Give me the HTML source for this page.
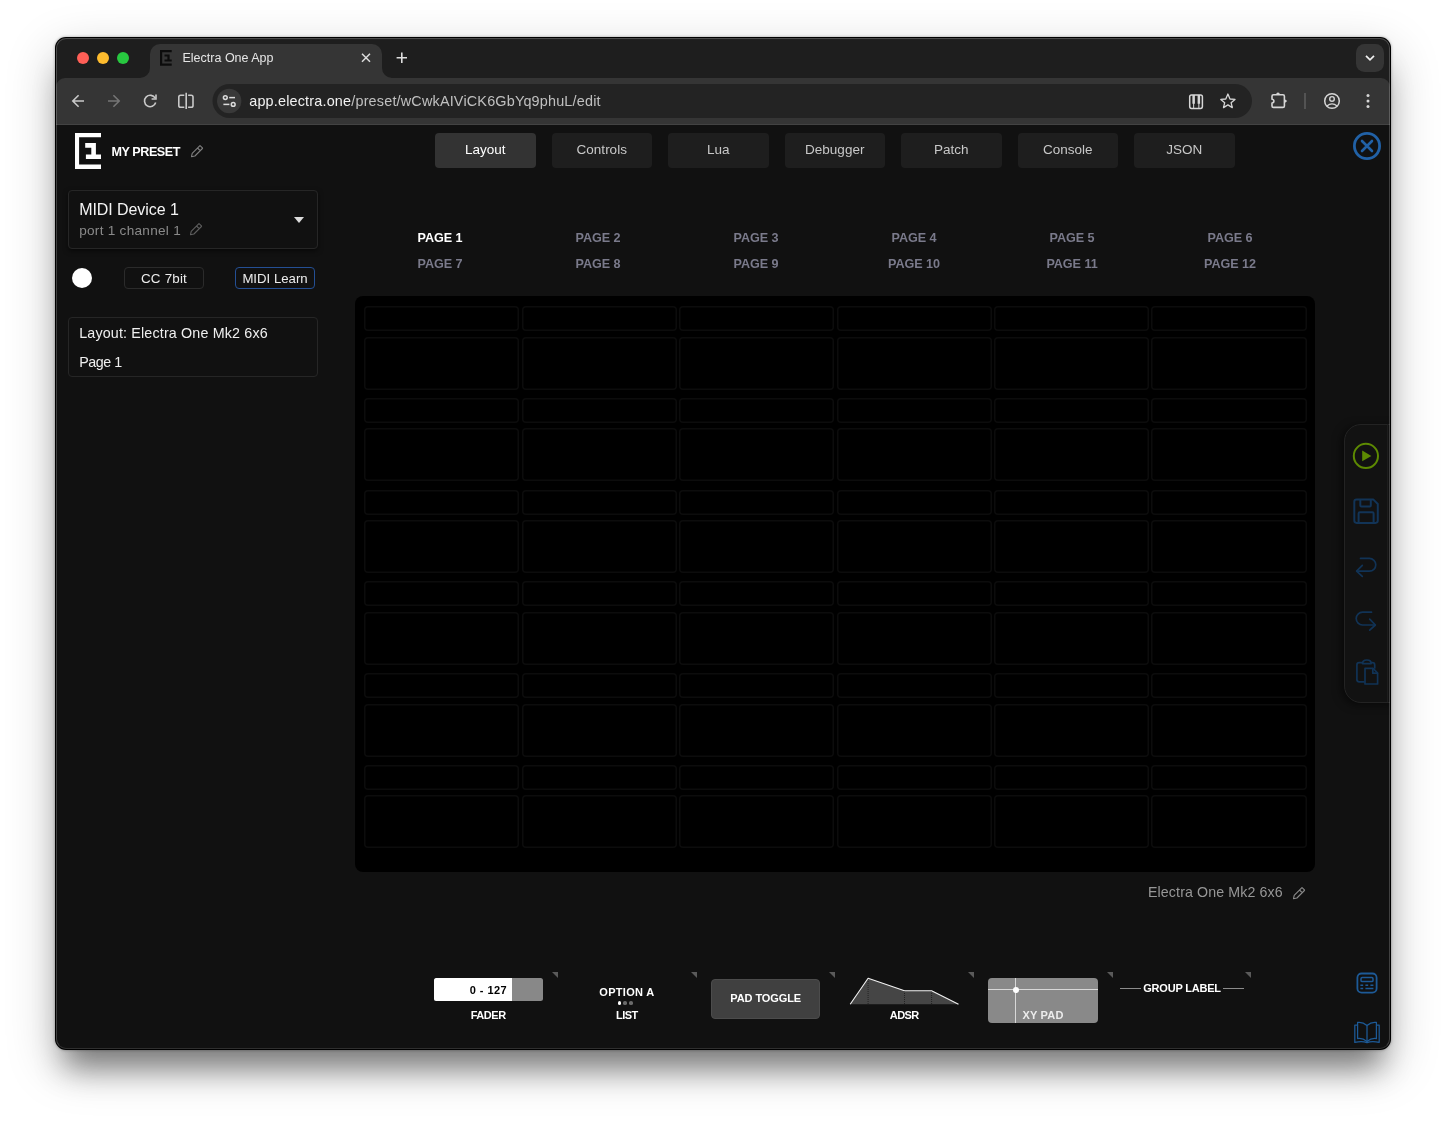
<!DOCTYPE html>
<html lang="en">
<head>
<meta charset="utf-8">
<title>Electra One App</title>
<style>
*{box-sizing:border-box;margin:0;padding:0}
html,body{width:1446px;height:1123px;overflow:hidden;background:#fff}
body{position:relative;font-family:"Liberation Sans",Arial,sans-serif;color:#fff;-webkit-font-smoothing:antialiased}
#win{position:absolute;left:55px;top:37px;width:1336px;height:1013px;border-radius:11px;background:#000;
 box-shadow:0 0 3px rgba(0,0,0,.35),0 16px 50px rgba(0,0,0,.22),0 28px 30px -10px rgba(0,0,0,.42)}
#clip{position:absolute;left:1px;top:1px;right:1px;bottom:1px;border-radius:10px;overflow:hidden;background:#111}
#pg{position:absolute;left:-56px;top:-38px;width:1446px;height:1123px;will-change:transform}
#edge{position:absolute;left:1px;top:1px;right:1px;bottom:1px;border-radius:10px;border:1px solid rgba(255,255,255,.2);border-bottom-color:rgba(255,255,255,.13);pointer-events:none}
.a{position:absolute}
.t{position:absolute;white-space:nowrap;line-height:1}
.b{font-weight:700}
#tabstrip{left:56px;top:38px;width:1334px;height:52px;background:#1e1e1e}
#toolbar{left:56px;top:78px;width:1334px;height:47px;background:#353535;border-bottom:1px solid #434343;border-radius:9px 9px 0 0}
#content{left:56px;top:125px;width:1334px;height:924px;background:#111}
</style>
</head>
<body>
<div id="win">
<div id="clip"><div id="pg">

<!-- ===== browser chrome ===== -->
<div id="tabstrip" class="a"></div>
<div id="toolbar" class="a"></div>
<div id="content" class="a"></div>

<!--CHROME-START-->
<!-- traffic lights -->
<div class="a" style="left:77px;top:52px;width:12px;height:12px;border-radius:50%;background:#ff5f57"></div>
<div class="a" style="left:97px;top:52px;width:12px;height:12px;border-radius:50%;background:#febc2e"></div>
<div class="a" style="left:117px;top:52px;width:12px;height:12px;border-radius:50%;background:#28c840"></div>
<!-- active tab -->
<div class="a" style="left:150px;top:44px;width:232px;height:34px;background:#353535;border-radius:10px 10px 0 0"></div>
<svg class="a" style="left:0;top:0" width="1446" height="130" viewBox="0 0 1446 130" fill="none">
 <!-- tab outward curves -->
 <path d="M140 78 A10 10 0 0 0 150 68 V78 Z" fill="#353535"/>
 <path d="M392 78 A10 10 0 0 1 382 68 V78 Z" fill="#353535"/>
 <!-- favicon -->
 <g fill="#0c0c0c">
  <path d="M160 50.1 H171.7 V52.3 H162.2 V63.6 H171.7 V65.8 H160 Z"/>
  <path d="M164.5 54.4 H169.6 V59.6 H171.7 V61.6 H164.5 V59.6 H167.4 V56.4 H164.5 Z"/>
 </g>
 <!-- tab close -->
 <path d="M362 53.8 L370 61.8 M370 53.8 L362 61.8" stroke="#dedede" stroke-width="1.5"/>
 <!-- new tab plus -->
 <path d="M396.6 57.8 H407 M401.8 52.6 V63" stroke="#dedede" stroke-width="1.6"/>
 <!-- tab search dropdown -->
 <rect x="1356" y="44" width="28" height="28" rx="8.5" fill="#353535"/>
 <path d="M1366 55.8 L1370 59.8 L1374 55.8" stroke="#f0f0f0" stroke-width="1.7"/>
 <!-- back -->
 <path d="M84 101 H73 M78.6 95.2 L72.8 101 L78.6 106.8" stroke="#c9c9c9" stroke-width="1.6"/>
 <!-- forward -->
 <path d="M108 101 H119 M113.4 95.2 L119.2 101 L113.4 106.8" stroke="#757575" stroke-width="1.6"/>
 <!-- reload -->
 <path d="M155.2 98.2 A5.7 5.7 0 1 0 155.7 102.6" stroke="#c9c9c9" stroke-width="1.6"/>
 <path d="M156 94.6 V99 H151.6" stroke="#c9c9c9" stroke-width="1.6"/>
 <!-- split view -->
 <path d="M184.3 95.2 H180.6 Q178.8 95.2 178.8 97 V105.4 Q178.8 107.2 180.6 107.2 H184.3 M186.2 92.8 V109 M188.1 95.2 H191.2 Q193 95.2 193 97 V105.4 Q193 107.2 191.2 107.2 H188.1" stroke="#c9c9c9" stroke-width="1.6"/>
 <!-- url bar -->
 <rect x="212.5" y="84" width="1039.5" height="34" rx="17" fill="#232323"/>
 <circle cx="229.2" cy="101" r="12.2" fill="#393939"/>
 <!-- tune icon -->
 <g stroke="#dcdcdc" stroke-width="1.5">
  <circle cx="225.3" cy="97.6" r="1.9"/><path d="M229.2 97.6 H235"/>
  <circle cx="233.2" cy="104.4" r="1.9"/><path d="M223.4 104.4 H229.4"/>
 </g>
 <!-- piano -->
 <rect x="1189.7" y="95" width="12.7" height="13.4" rx="1.8" stroke="#d6d6d6" stroke-width="1.5"/>
 <path d="M1193.65 103 V108 M1198.85 103 V108" stroke="#d6d6d6" stroke-width="1"/>
 <path d="M1192.4 95 H1194.9 V103.8 H1192.4 Z M1197.6 95 H1200.1 V103.8 H1197.6 Z" fill="#d6d6d6"/>
 <!-- star -->
 <path d="M1227.9 94 L1230 99 L1235 99.4 L1231.1 102.7 L1232.3 107.6 L1227.9 104.9 L1223.5 107.6 L1224.7 102.7 L1220.8 99.4 L1225.8 99 Z" stroke="#d6d6d6" stroke-width="1.3" stroke-linejoin="round"/>
 <!-- puzzle -->
 <path d="M1272 96.3 Q1272 94.8 1273.5 94.8 H1282.9 Q1284.4 94.8 1284.4 96.3 V105.9 Q1284.4 107.4 1282.9 107.4 H1273.5 Q1272 107.4 1272 105.9 V103 A1.9 1.9 0 0 0 1272 99.2 Z" stroke="#d6d6d6" stroke-width="1.6" stroke-linejoin="round"/>
 <path d="M1276.2 94.4 A1.8 1.9 0 0 1 1279.8 94.4 Z M1284.8 99.2 L1287.2 101.1 L1284.8 103 Z" fill="#d6d6d6"/>
 <!-- separator -->
 <path d="M1305 93 V109" stroke="#5c5c5c" stroke-width="1.6"/>
 <!-- profile -->
 <circle cx="1332" cy="101" r="7.3" stroke="#d6d6d6" stroke-width="1.5"/>
 <circle cx="1332" cy="98.9" r="2.3" stroke="#d6d6d6" stroke-width="1.4"/>
 <path d="M1326.9 106 Q1332 101.8 1337.1 106" stroke="#d6d6d6" stroke-width="1.4"/>
 <!-- menu dots -->
 <g fill="#d6d6d6"><circle cx="1368" cy="95.4" r="1.5"/><circle cx="1368" cy="101" r="1.5"/><circle cx="1368" cy="106.6" r="1.5"/></g>
</svg>
<div class="t" style="left:182.5px;top:52.4px;font-size:12.5px;color:#e6e6e6">Electra One App</div>
<div class="t" style="left:249.2px;top:94px;font-size:14.4px;letter-spacing:.19px;color:#c0c0c0"><span style="color:#f2f2f2">app.electra.one</span>/preset/wCwkAIViCK6GbYq9phuL/edit</div>
<!--CHROME-END-->

<!--APP-START-->
<style>
.nb{position:absolute;top:133px;width:100.5px;height:35px;border-radius:4px;background:#1e1e1e;color:#c8c8c8;font-size:13.5px;line-height:34px;text-align:center;white-space:nowrap}
.nb.on{background:#333;color:#fff}
.pgn{position:absolute;width:158px;text-align:center;font-weight:700;font-size:12.6px;line-height:1;color:#7a7a8b;white-space:nowrap;letter-spacing:-.05px}
.pgn.on{color:#fff}
.bx{position:absolute;border:1px solid #262626;border-radius:4px}
.cell{position:absolute;width:155.4px;box-shadow:inset 0 0 0 1.5px #0c0c0c;border-radius:4px}
.cl{position:absolute;font-weight:700;font-size:11px;line-height:1;white-space:nowrap;text-align:center;color:#fff}
.tri{position:absolute;top:972px;width:0;height:0;margin-left:.4px;border-top:6px solid #5a5a5a;border-left:6px solid transparent}
</style>
<!-- logo -->
<svg class="a" style="left:74px;top:132px" width="30" height="40" viewBox="74 132 30 40">
 <path d="M75 132.9 H101 V137.3 H79.1 V164.5 H101 V169 H75 Z" fill="#fff"/>
 <path d="M85.2 143.1 H95.9 V154.6 H101 V158.9 H85.9 V154.6 H91.3 V147.7 H85.2 Z" fill="#fff"/>
</svg>
<div class="t b" style="left:111.5px;top:145.9px;font-size:12.6px;letter-spacing:-.45px;color:#fff">MY PRESET</div>
<svg class="a" style="left:189px;top:143px" width="16" height="16" viewBox="0 0 16 16" fill="none" stroke="#7f7f7f" stroke-width="1.1" stroke-linejoin="round">
 <path d="M2.5 13.7 L3.2 10.3 L10.7 2.8 Q11 2.5 11.3 2.8 L13.4 4.9 Q13.7 5.2 13.4 5.5 L5.9 13 Z M8.5 5 L11.2 7.7"/>
</svg>
<!-- nav buttons -->
<div class="nb on" style="left:435px">Layout</div>
<div class="nb" style="left:551.5px">Controls</div>
<div class="nb" style="left:668px">Lua</div>
<div class="nb" style="left:784.5px">Debugger</div>
<div class="nb" style="left:901px">Patch</div>
<div class="nb" style="left:1017.5px">Console</div>
<div class="nb" style="left:1134px">JSON</div>
<!-- close -->
<svg class="a" style="left:1351px;top:130px" width="32" height="32" viewBox="1351 130 32 32" fill="none" stroke="#2161a6">
 <circle cx="1367" cy="146" r="12.6" stroke-width="2.8"/>
 <path d="M1362 141 L1372 151 M1372 141 L1362 151" stroke-width="2.6" stroke-linecap="round"/>
</svg>
<!-- device box -->
<div class="bx" style="left:68px;top:189.5px;width:250px;height:59px;box-shadow:0 2px 5px rgba(0,0,0,.55)"></div>
<div class="t" style="left:79.2px;top:201.6px;font-size:16px;color:#f4f4f4;letter-spacing:-.07px">MIDI Device 1</div>
<div class="t" style="left:79.2px;top:223.6px;font-size:13.6px;color:#8a8a8a;letter-spacing:.27px">port 1 channel 1</div>
<svg class="a" style="left:187.5px;top:220.9px" width="16" height="16" viewBox="0 0 16 16" fill="none" stroke="#5e5e5e" stroke-width="1.1" stroke-linejoin="round">
 <path d="M2.5 13.7 L3.2 10.3 L10.7 2.8 Q11 2.5 11.3 2.8 L13.4 4.9 Q13.7 5.2 13.4 5.5 L5.9 13 Z M8.5 5 L11.2 7.7"/>
</svg>
<div class="a" style="left:294.2px;top:217px;width:0;height:0;border-left:5.8px solid transparent;border-right:5.8px solid transparent;border-top:6px solid #dcdcdc"></div>
<!-- row -->
<div class="a" style="left:72px;top:267.7px;width:20.4px;height:20.4px;border-radius:50%;background:#fff"></div>
<div class="bx" style="left:124px;top:267px;width:80px;height:22px;border-color:#2b2b2b"></div>
<div class="t" style="left:124px;top:272px;width:80px;text-align:center;font-size:13.4px;color:#ededed;letter-spacing:.2px">CC 7bit</div>
<div class="bx" style="left:235px;top:267px;width:80px;height:22px;border-color:#244f94"></div>
<div class="t" style="left:235px;top:272px;width:80px;text-align:center;font-size:13.2px;color:#ededed">MIDI Learn</div>
<!-- layout box -->
<div class="bx" style="left:68px;top:317px;width:250px;height:60px"></div>
<div class="t" style="left:79.2px;top:325.6px;font-size:14.3px;color:#efefef;letter-spacing:.16px">Layout: Electra One Mk2 6x6</div>
<div class="t" style="left:79.2px;top:354.7px;font-size:14.3px;color:#efefef;letter-spacing:-.45px">Page 1</div>
<!-- page names -->
<div class="pgn on" style="left:361px;top:231.6px">PAGE 1</div>
<div class="pgn" style="left:519px;top:231.6px">PAGE 2</div>
<div class="pgn" style="left:677px;top:231.6px">PAGE 3</div>
<div class="pgn" style="left:835px;top:231.6px">PAGE 4</div>
<div class="pgn" style="left:993px;top:231.6px">PAGE 5</div>
<div class="pgn" style="left:1151px;top:231.6px">PAGE 6</div>
<div class="pgn" style="left:361px;top:257.6px">PAGE 7</div>
<div class="pgn" style="left:519px;top:257.6px">PAGE 8</div>
<div class="pgn" style="left:677px;top:257.6px">PAGE 9</div>
<div class="pgn" style="left:835px;top:257.6px">PAGE 10</div>
<div class="pgn" style="left:993px;top:257.6px">PAGE 11</div>
<div class="pgn" style="left:1151px;top:257.6px">PAGE 12</div>
<!-- grid panel -->
<div id="grid" class="a" style="left:355px;top:296px;width:960px;height:576px;background:#000;border-radius:8px">
<div class="cell" style="left:9.1px;top:10.0px;height:25.2px"></div>
<div class="cell" style="left:9.1px;top:40.5px;height:53.3px"></div>
<div class="cell" style="left:166.6px;top:10.0px;height:25.2px"></div>
<div class="cell" style="left:166.6px;top:40.5px;height:53.3px"></div>
<div class="cell" style="left:324.0px;top:10.0px;height:25.2px"></div>
<div class="cell" style="left:324.0px;top:40.5px;height:53.3px"></div>
<div class="cell" style="left:481.5px;top:10.0px;height:25.2px"></div>
<div class="cell" style="left:481.5px;top:40.5px;height:53.3px"></div>
<div class="cell" style="left:638.9px;top:10.0px;height:25.2px"></div>
<div class="cell" style="left:638.9px;top:40.5px;height:53.3px"></div>
<div class="cell" style="left:796.4px;top:10.0px;height:25.2px"></div>
<div class="cell" style="left:796.4px;top:40.5px;height:53.3px"></div>
<div class="cell" style="left:9.1px;top:101.8px;height:25.2px"></div>
<div class="cell" style="left:9.1px;top:132.2px;height:53.3px"></div>
<div class="cell" style="left:166.6px;top:101.8px;height:25.2px"></div>
<div class="cell" style="left:166.6px;top:132.2px;height:53.3px"></div>
<div class="cell" style="left:324.0px;top:101.8px;height:25.2px"></div>
<div class="cell" style="left:324.0px;top:132.2px;height:53.3px"></div>
<div class="cell" style="left:481.5px;top:101.8px;height:25.2px"></div>
<div class="cell" style="left:481.5px;top:132.2px;height:53.3px"></div>
<div class="cell" style="left:638.9px;top:101.8px;height:25.2px"></div>
<div class="cell" style="left:638.9px;top:132.2px;height:53.3px"></div>
<div class="cell" style="left:796.4px;top:101.8px;height:25.2px"></div>
<div class="cell" style="left:796.4px;top:132.2px;height:53.3px"></div>
<div class="cell" style="left:9.1px;top:193.5px;height:25.2px"></div>
<div class="cell" style="left:9.1px;top:224.0px;height:53.3px"></div>
<div class="cell" style="left:166.6px;top:193.5px;height:25.2px"></div>
<div class="cell" style="left:166.6px;top:224.0px;height:53.3px"></div>
<div class="cell" style="left:324.0px;top:193.5px;height:25.2px"></div>
<div class="cell" style="left:324.0px;top:224.0px;height:53.3px"></div>
<div class="cell" style="left:481.5px;top:193.5px;height:25.2px"></div>
<div class="cell" style="left:481.5px;top:224.0px;height:53.3px"></div>
<div class="cell" style="left:638.9px;top:193.5px;height:25.2px"></div>
<div class="cell" style="left:638.9px;top:224.0px;height:53.3px"></div>
<div class="cell" style="left:796.4px;top:193.5px;height:25.2px"></div>
<div class="cell" style="left:796.4px;top:224.0px;height:53.3px"></div>
<div class="cell" style="left:9.1px;top:285.2px;height:25.2px"></div>
<div class="cell" style="left:9.1px;top:315.8px;height:53.3px"></div>
<div class="cell" style="left:166.6px;top:285.2px;height:25.2px"></div>
<div class="cell" style="left:166.6px;top:315.8px;height:53.3px"></div>
<div class="cell" style="left:324.0px;top:285.2px;height:25.2px"></div>
<div class="cell" style="left:324.0px;top:315.8px;height:53.3px"></div>
<div class="cell" style="left:481.5px;top:285.2px;height:25.2px"></div>
<div class="cell" style="left:481.5px;top:315.8px;height:53.3px"></div>
<div class="cell" style="left:638.9px;top:285.2px;height:25.2px"></div>
<div class="cell" style="left:638.9px;top:315.8px;height:53.3px"></div>
<div class="cell" style="left:796.4px;top:285.2px;height:25.2px"></div>
<div class="cell" style="left:796.4px;top:315.8px;height:53.3px"></div>
<div class="cell" style="left:9.1px;top:377.0px;height:25.2px"></div>
<div class="cell" style="left:9.1px;top:407.5px;height:53.3px"></div>
<div class="cell" style="left:166.6px;top:377.0px;height:25.2px"></div>
<div class="cell" style="left:166.6px;top:407.5px;height:53.3px"></div>
<div class="cell" style="left:324.0px;top:377.0px;height:25.2px"></div>
<div class="cell" style="left:324.0px;top:407.5px;height:53.3px"></div>
<div class="cell" style="left:481.5px;top:377.0px;height:25.2px"></div>
<div class="cell" style="left:481.5px;top:407.5px;height:53.3px"></div>
<div class="cell" style="left:638.9px;top:377.0px;height:25.2px"></div>
<div class="cell" style="left:638.9px;top:407.5px;height:53.3px"></div>
<div class="cell" style="left:796.4px;top:377.0px;height:25.2px"></div>
<div class="cell" style="left:796.4px;top:407.5px;height:53.3px"></div>
<div class="cell" style="left:9.1px;top:468.8px;height:25.2px"></div>
<div class="cell" style="left:9.1px;top:499.2px;height:53.3px"></div>
<div class="cell" style="left:166.6px;top:468.8px;height:25.2px"></div>
<div class="cell" style="left:166.6px;top:499.2px;height:53.3px"></div>
<div class="cell" style="left:324.0px;top:468.8px;height:25.2px"></div>
<div class="cell" style="left:324.0px;top:499.2px;height:53.3px"></div>
<div class="cell" style="left:481.5px;top:468.8px;height:25.2px"></div>
<div class="cell" style="left:481.5px;top:499.2px;height:53.3px"></div>
<div class="cell" style="left:638.9px;top:468.8px;height:25.2px"></div>
<div class="cell" style="left:638.9px;top:499.2px;height:53.3px"></div>
<div class="cell" style="left:796.4px;top:468.8px;height:25.2px"></div>
<div class="cell" style="left:796.4px;top:499.2px;height:53.3px"></div>
</div>
<div class="t" style="left:1148px;top:885.2px;font-size:14.2px;color:#979797;letter-spacing:.12px">Electra One Mk2 6x6</div>
<svg class="a" style="left:1291px;top:884.5px" width="16" height="16" viewBox="0 0 16 16" fill="none" stroke="#8a8a8a" stroke-width="1.1" stroke-linejoin="round">
 <path d="M2.5 13.7 L3.2 10.3 L10.7 2.8 Q11 2.5 11.3 2.8 L13.4 4.9 Q13.7 5.2 13.4 5.5 L5.9 13 Z M8.5 5 L11.2 7.7"/>
</svg>
<!-- palette -->
<div class="tri" style="left:551.6px"></div>
<div class="tri" style="left:690.3px"></div>
<div class="tri" style="left:828.9px"></div>
<div class="tri" style="left:967.6px"></div>
<div class="tri" style="left:1106.2px"></div>
<div class="tri" style="left:1244.9px"></div>
<!-- fader -->
<div class="a" style="left:433.7px;top:978px;width:109px;height:23px;border-radius:2.5px;background:#888;overflow:hidden"><div style="width:78.6px;height:23px;background:#fff"></div></div>
<div class="cl" style="left:469.7px;top:984.6px;color:#000;letter-spacing:.45px">0 - 127</div>
<div class="cl" style="left:433.7px;width:109px;top:1010.1px;letter-spacing:-.45px">FADER</div>
<!-- list -->
<div class="cl" style="left:572.4px;width:109px;top:986.7px;letter-spacing:.3px">OPTION A</div>
<div class="a" style="left:617.6px;top:1001px;width:3.7px;height:3.7px;border-radius:50%;background:#fff"></div>
<div class="a" style="left:623.3px;top:1001px;width:3.7px;height:3.7px;border-radius:50%;background:#6a6a6a"></div>
<div class="a" style="left:628.9px;top:1001px;width:3.7px;height:3.7px;border-radius:50%;background:#6a6a6a"></div>
<div class="cl" style="left:572.4px;width:109px;top:1010.1px;letter-spacing:-.55px">LIST</div>
<!-- pad -->
<div class="a" style="left:711px;top:978.6px;width:109.4px;height:40.4px;border-radius:4px;background:#404040;border:1px solid #4c4c4c"></div>
<div class="cl" style="left:711px;width:109.4px;top:993px;letter-spacing:-.1px">PAD TOGGLE</div>
<!-- adsr -->
<svg class="a" style="left:845px;top:972px" width="120" height="36" viewBox="845 972 120 36" fill="none">
 <path d="M850.2 1004.2 L868.1 978.2 L904.5 990.7 H931.6 L958.5 1004.2 Z" fill="#454545"/>
 <path d="M868.1 979 V1004.2 M904.5 991 V1004.2 M931.6 991 V1004.2" stroke="#222" stroke-width="1" stroke-dasharray="1 1"/>
 <path d="M850.2 1004.2 L868.1 978.2 L904.5 990.7 H931.6 L958.5 1004.2" stroke="#f2f2f2" stroke-width="1.1" stroke-linejoin="round"/>
</svg>
<div class="cl" style="left:849.7px;width:109px;top:1010.1px;letter-spacing:-.6px">ADSR</div>
<!-- xy -->
<div class="a" style="left:988.2px;top:978.4px;width:110px;height:44.2px;border-radius:4px;background:#898989;overflow:hidden">
 <div class="a" style="left:0;top:10.6px;width:110px;height:1.4px;background:#d8d8d8"></div>
 <div class="a" style="left:26.8px;top:0;width:1.4px;height:45px;background:#d8d8d8"></div>
 <div class="a" style="left:24.4px;top:8.2px;width:6.2px;height:6.2px;border-radius:50%;background:#fff"></div>
</div>
<div class="cl" style="left:1022.4px;top:1010.1px;color:#ececec;letter-spacing:.2px">XY PAD</div>
<!-- group -->
<div class="a" style="left:1120px;top:988px;width:20.7px;height:1px;background:#8c8c8c"></div>
<div class="a" style="left:1223px;top:988px;width:21px;height:1px;background:#8c8c8c"></div>
<div class="cl" style="left:1143.2px;top:982.6px;letter-spacing:-.2px">GROUP LABEL</div>

<!-- side panel -->
<div class="a" style="left:1344px;top:423.5px;width:50px;height:279px;border:1px solid #232323;border-radius:17px 0 0 17px;background:#121212;box-shadow:-3px 2px 8px rgba(0,0,0,.5)"></div>
<div class="a" style="left:1387.3px;top:424px;width:1px;height:278px;background:#1d1d1d"></div>
<svg class="a" style="left:1340px;top:430px" width="50" height="270" viewBox="1340 430 50 270" fill="none">
 <!-- play -->
 <circle cx="1365.9" cy="455.9" r="12.1" stroke="#5d8a02" stroke-width="2"/>
 <path d="M1362.2 450.6 L1371.4 455.9 L1362.2 461.2 Z" fill="#5d8a02"/>
 <!-- save -->
 <g stroke="#123457" stroke-width="2" stroke-linejoin="round">
  <path d="M1356.6 499.4 H1373.2 L1377.8 504 V520.6 Q1377.8 522.9 1375.5 522.9 H1356.6 Q1354.3 522.9 1354.3 520.6 V501.7 Q1354.3 499.4 1356.6 499.4 Z"/>
  <path d="M1360.3 499.6 V505.6 Q1360.3 506.6 1361.3 506.6 H1369.8 Q1370.8 506.6 1370.8 505.6 V499.6"/>
  <path d="M1358.6 522.6 V513.4 Q1358.6 512.2 1359.8 512.2 H1372.4 Q1373.6 512.2 1373.6 513.4 V522.6"/>
 </g>
 <!-- undo -->
 <g stroke="#113356" stroke-width="1.7" stroke-linecap="round" stroke-linejoin="round">
  <path d="M1360.5 558.4 H1369.4 A6.4 6.4 0 0 1 1369.4 571.2 H1357"/>
  <path d="M1362.3 565.4 L1356.6 571.2 L1362.3 576.4"/>
  <!-- redo -->
  <path d="M1371.5 612.2 H1362.6 A6.4 6.4 0 0 0 1362.6 625 H1375"/>
  <path d="M1369.7 619.2 L1375.4 625 L1369.7 630.2"/>
  <!-- paste -->
  <path d="M1362.5 662.6 H1359.2 Q1356.9 662.6 1356.9 664.9 V679.6 Q1356.9 681.9 1359.2 681.9 H1364"/>
  <path d="M1371.2 662.6 H1372.4 Q1374.7 662.6 1374.7 664.9 V668"/>
  <path d="M1362.5 663.6 Q1362.5 660 1366.9 660 Q1371.2 660 1371.2 663.6 Z"/>
  <path d="M1365 668.4 H1373 L1377.6 673 V684 H1365 Z"/>
  <path d="M1372.8 668.6 V673.2 H1377.4"/>
 </g>
</svg>
<!-- bottom right icons -->
<svg class="a" style="left:1350px;top:968px" width="36" height="80" viewBox="1350 968 36 80" fill="none" stroke="#1d5a97" stroke-linejoin="round">
 <rect x="1357.4" y="973.5" width="19.2" height="19.2" rx="4.2" stroke-width="1.8"/>
 <rect x="1361" y="977.6" width="12" height="4" rx="1.2" stroke-width="1.5"/>
 <path d="M1360.4 985.3 H1363.2 M1365.4 985.3 H1368.2 M1370.4 985.3 H1373.4 M1360.4 988.5 H1363.2 M1365.4 988.5 H1373.4" stroke-width="1.5"/>
 <g stroke-width="1.25">
  <path d="M1367 1025.5 Q1362.6 1021.6 1357.6 1022.4 V1038.6 Q1362.6 1037.8 1367 1041.4 Q1371.4 1037.8 1376.4 1038.6 V1022.4 Q1371.4 1021.6 1367 1025.5 Z"/>
  <path d="M1367 1025.5 V1041.4"/>
  <path d="M1357.6 1025 H1354.8 V1042.4 Q1362 1040.6 1367 1042.6 Q1372 1040.6 1379.2 1042.4 V1025 H1376.4"/>
 </g>
</svg>

<!--APP-END-->

</div></div>
<div id="edge"></div>
</div>
</body>
</html>
